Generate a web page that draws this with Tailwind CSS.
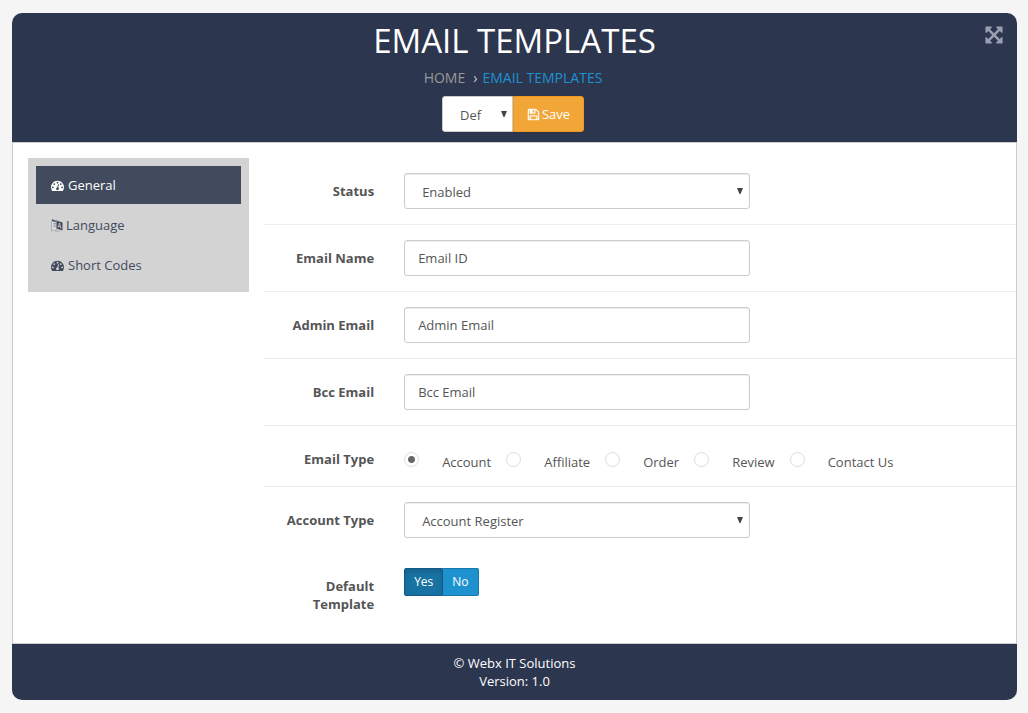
<!DOCTYPE html>
<html lang="en">
<head>
    <meta charset="UTF-8">
    <meta name="viewport" content="width=device-width, initial-scale=1.0">
    <title>Email Templates</title>
    <script src="https://cdn.jsdelivr.net/npm/@tailwindcss/browser@4"></script>
    <style>
        body {
            font-family: 'Open Sans', 'Noto Sans', sans-serif;
        }
    </style>
</head>
<body class="bg-[#f5f5f5] text-[13px] leading-[18px] text-[#555]">
    <!-- Shared icons -->
    <svg class="hidden">
        <symbol id="icon-dashboard" viewBox="0 0 1792 1792">
            <path d="M384 1152q0-53-37.5-90.5t-90.5-37.5-90.5 37.5-37.5 90.5 37.5 90.5 90.5 37.5 90.5-37.5 37.5-90.5zm192-448q0-53-37.5-90.5t-90.5-37.5-90.5 37.5-37.5 90.5 37.5 90.5 90.5 37.5 90.5-37.5 37.5-90.5zm428 481l101-382q6-26-7.5-48.5t-38.5-29.5-48 6.5-30 39.5l-101 382q-60 5-107 43.5t-63 98.5q-20 77 20 146t117 89 146-20 89-117q16-60-6-117t-72-91zm660-33q0-53-37.5-90.5t-90.5-37.5-90.5 37.5-37.5 90.5 37.5 90.5 90.5 37.5 90.5-37.5 37.5-90.5zm-640-640q0-53-37.5-90.5t-90.5-37.5-90.5 37.5-37.5 90.5 37.5 90.5 90.5 37.5 90.5-37.5 37.5-90.5zm448 192q0-53-37.5-90.5t-90.5-37.5-90.5 37.5-37.5 90.5 37.5 90.5 90.5 37.5 90.5-37.5 37.5-90.5zm320 448q0 261-141 483-19 29-54 29h-1402q-35 0-54-29-141-221-141-483 0-182 71-348t191-286 286-191 348-71 348 71 286 191 191 286 71 348z"/>
        </symbol>
        <symbol id="icon-caret" viewBox="0 0 6 6">
            <path d="M0 0h6L3.500 6h-1z"/>
        </symbol>
    </svg>

    <div class="mt-[13px] mr-[11px] mb-[13px] ml-3 rounded-[10px] overflow-hidden">
        <header class="relative bg-[#2c364f] py-2.5 text-center">
            <h1 class="text-[33px] leading-9 text-white">EMAIL TEMPLATES</h1>
            <nav class="mt-[9px] flex justify-center pr-[3px] text-sm leading-5">
                <a href="#" class="text-[#999]">HOME</a>
                <span class="ml-2 mr-[5px] text-[#ccc]">›</span>
                <a href="#" class="text-[#1e91cf]">EMAIL TEMPLATES</a>
            </nav>
            <form class="mt-2 flex justify-center pr-[3px]">
                <div class="relative">
                    <select aria-label="Store" class="h-9 w-[71px] appearance-none rounded-l-[3px] border border-[#ccc] bg-white pt-[2px] pl-[17px] text-[13px]">
                        <option>Def</option>
                    </select>
                    <svg class="absolute top-[15px] right-[6px] size-[6px] fill-[#444]"><use href="#icon-caret"/></svg>
                </div>
                <button type="button" class="flex h-9 w-[71px] items-center justify-center gap-[2px] rounded-r-[3px] border border-[#f0981b] bg-[#f3a638] text-white">
                    <svg class="size-[13px] fill-current stroke-current" stroke-width="50" viewBox="0 0 1792 1792">
                        <path d="M512 1536h768v-384h-768v384zm896 0h128v-896q0-14-10-38.5t-20-34.5l-281-281q-10-10-34-20t-39-10v416q0 40-28 68t-68 28h-576q-40 0-68-28t-28-68v-416h-128v1280h128v-416q0-40 28-68t68-28h832q40 0 68 28t28 68v416zm-384-928v-320q0-13-9.5-22.5t-22.5-9.5h-192q-13 0-22.5 9.5t-9.5 22.5v320q0 13 9.5 22.5t22.5 9.5h192q13 0 22.5-9.5t9.5-22.5zm640 32v928q0 40-28 68t-68 28h-1344q-40 0-68-28t-28-68v-1344q0-40 28-68t68-28h928q40 0 88 20t76 48l280 280q28 28 48 76t20 88z"/>
                    </svg>
                    Save
                </button>
            </form>
            <button type="button" aria-label="Fullscreen" class="absolute top-3 right-[13px]">
                <svg class="size-5 fill-[#999fb0]" viewBox="0 0 1792 1792">
                    <path d="M1411 541l-355 355 355 355 144-144q29-31 70-14 39 17 39 59v448q0 26-19 45t-45 19h-448q-42 0-59-40-17-39 14-69l144-144-355-355-355 355 144 144q31 30 14 69-17 40-59 40h-448q-26 0-45-19t-19-45v-448q0-42 40-59 39-17 69 14l144 144 355-355-355-355-144 144q-19 19-45 19-12 0-24-5-40-17-40-59v-448q0-26 19-45t45-19h448q42 0 59 40 17 39-14 69l-144 144 355 355 355-355-144-144q-31-30-14-69 17-40 59-40h448q26 0 45 19t19 45v448q0 42-39 59-13 5-25 5-26 0-45-19z"/>
                </svg>
            </button>
        </header>

        <main class="flex items-start border border-[#ccc] bg-white pb-[15px]">
            <div class="w-1/4 px-[15px] pt-[15px]">
                <nav class="flex flex-col gap-[2px] bg-[#d3d3d3] p-2 text-[#424a5d]">
                    <a href="#" class="flex h-[38px] items-center gap-1 bg-[#424a5d] px-[15px] text-white">
                        <svg class="size-[13px] fill-current"><use href="#icon-dashboard"/></svg>
                        General
                    </a>
                    <a href="#" class="flex h-[38px] items-center gap-[3px] px-[15px]">
                        <svg class="h-[13px] w-3" viewBox="0 0 12 13">
                            <path d="M.5 2.5L6 1v9.500L.5 12z" fill="#dedede" stroke="#8c909a" stroke-width=".6"/>
                            <path d="M1 0l4 2v1L1 2z" fill="#424a5d"/>
                            <path d="M2 5l3-1M3.500 3.500v1M4.500 4.500q-.5 3-2.500 4M2.500 6l2.500 2" fill="none" stroke="#777d8b" stroke-width=".6"/>
                            <path d="M5.500 1.500l6 2v8l-6-2z" fill="#424a5d"/>
                            <path d="M7 8.500l1.500-4.500L10 9.500M7.500 7.200l2 .6" fill="none" stroke="#d3d3d3" stroke-width=".8"/>
                            <path d="M4 12q3 1 5-.5" fill="none" stroke="#8c909a" stroke-width=".6"/>
                        </svg>
                        Language
                    </a>
                    <a href="#" class="flex h-[38px] items-center gap-1 px-[15px]">
                        <svg class="size-[13px] fill-current"><use href="#icon-dashboard"/></svg>
                        Short Codes
                    </a>
                </nav>
            </div>

            <form class="w-3/4 pt-[15px]">
                <div class="flex border-b border-[#ededed] py-[15px]">
                    <label for="status" class="w-1/6 px-[15px] pt-[9px] text-right font-bold">Status</label>
                    <div class="w-1/2 px-[15px]">
                        <div class="relative">
                            <select id="status" class="block h-9 w-full appearance-none rounded-[3px] border border-[#ccc] bg-white pt-[2px] pl-[17px] text-[13px] shadow-[inset_0_1px_1px_rgba(0,0,0,0.075)]">
                                <option>Enabled</option>
                                <option>Disabled</option>
                            </select>
                            <svg class="absolute top-[15px] right-[7px] size-[6px] fill-[#444]"><use href="#icon-caret"/></svg>
                        </div>
                    </div>
                </div>

                <div class="flex border-b border-[#ededed] py-[15px]">
                    <label for="email-name" class="w-1/6 px-[15px] pt-[9px] text-right font-bold">Email Name</label>
                    <div class="w-1/2 px-[15px]">
                        <input type="text" id="email-name" value="Email ID" class="block h-9 w-full rounded-[3px] border border-[#ccc] px-[13px] shadow-[inset_0_1px_1px_rgba(0,0,0,0.075)]">
                    </div>
                </div>

                <div class="flex border-b border-[#ededed] py-[15px]">
                    <label for="admin-email" class="w-1/6 px-[15px] pt-[9px] text-right font-bold">Admin Email</label>
                    <div class="w-1/2 px-[15px]">
                        <input type="text" id="admin-email" value="Admin Email" class="block h-9 w-full rounded-[3px] border border-[#ccc] px-[13px] shadow-[inset_0_1px_1px_rgba(0,0,0,0.075)]">
                    </div>
                </div>

                <div class="flex border-b border-[#ededed] py-[15px]">
                    <label for="bcc-email" class="w-1/6 px-[15px] pt-[9px] text-right font-bold">Bcc Email</label>
                    <div class="w-1/2 px-[15px]">
                        <input type="text" id="bcc-email" value="Bcc Email" class="block h-9 w-full rounded-[3px] border border-[#ccc] px-[13px] shadow-[inset_0_1px_1px_rgba(0,0,0,0.075)]">
                    </div>
                </div>

                <div role="radiogroup" aria-labelledby="email-type" class="flex border-b border-[#ededed] py-[15px]">
                    <span id="email-type" class="w-1/6 px-[15px] pt-[9px] text-right font-bold">Email Type</span>
                    <div class="flex w-5/6 gap-[15px] px-[15px] pt-[11px] pb-px">
                        <label class="flex gap-[23px]">
                            <input type="radio" name="type" checked class="size-[15px] appearance-none rounded-full border border-[#ddd] bg-white checked:bg-[radial-gradient(circle,#666_3px,transparent_4px)]">
                            <span class="pt-px -mb-px">Account</span>
                        </label>
                        <label class="flex gap-[23px]">
                            <input type="radio" name="type" class="size-[15px] appearance-none rounded-full border border-[#ddd] bg-white checked:bg-[radial-gradient(circle,#666_3px,transparent_4px)]">
                            <span class="pt-px -mb-px">Affiliate</span>
                        </label>
                        <label class="flex gap-[23px]">
                            <input type="radio" name="type" class="size-[15px] appearance-none rounded-full border border-[#ddd] bg-white checked:bg-[radial-gradient(circle,#666_3px,transparent_4px)]">
                            <span class="pt-px -mb-px">Order</span>
                        </label>
                        <label class="flex gap-[23px]">
                            <input type="radio" name="type" class="size-[15px] appearance-none rounded-full border border-[#ddd] bg-white checked:bg-[radial-gradient(circle,#666_3px,transparent_4px)]">
                            <span class="pt-px -mb-px">Review</span>
                        </label>
                        <label class="flex gap-[23px]">
                            <input type="radio" name="type" class="size-[15px] appearance-none rounded-full border border-[#ddd] bg-white checked:bg-[radial-gradient(circle,#666_3px,transparent_4px)]">
                            <span class="pt-px -mb-px">Contact Us</span>
                        </label>
                    </div>
                </div>

                <div class="flex py-[15px]">
                    <label for="account-type" class="w-1/6 px-[15px] pt-[9px] text-right font-bold">Account Type</label>
                    <div class="w-1/2 px-[15px]">
                        <div class="relative">
                            <select id="account-type" class="block h-9 w-full appearance-none rounded-[3px] border border-[#ccc] bg-white pt-[2px] pl-[17px] text-[13px] shadow-[inset_0_1px_1px_rgba(0,0,0,0.075)]">
                                <option>Account Register</option>
                            </select>
                            <svg class="absolute top-[15px] right-[7px] size-[6px] fill-[#444]"><use href="#icon-caret"/></svg>
                        </div>
                    </div>
                </div>

                <div role="group" aria-labelledby="default-template" class="flex items-start py-[15px]">
                    <span id="default-template" class="w-1/6 px-[15px] pt-[9px] text-right font-bold">Default Template</span>
                    <div class="flex w-1/2 px-[15px] text-xs text-white">
                        <button type="button" aria-pressed="true" class="h-7 rounded-l-[2px] border border-[#15598a] bg-[#1872a2] px-[9px] shadow-[inset_0_3px_5px_rgba(0,0,0,0.125)]">Yes</button>
                        <button type="button" aria-pressed="false" class="h-7 rounded-r-[2px] border border-l-0 border-[#1978ab] bg-[#1e91cf] px-[9px]">No</button>
                    </div>
                </div>
            </form>
        </main>

        <footer class="bg-[#2c364f] py-2.5 text-center text-white">
            <p>© Webx IT Solutions</p>
            <p>Version: 1.0</p>
        </footer>
    </div>
</body>
</html>
